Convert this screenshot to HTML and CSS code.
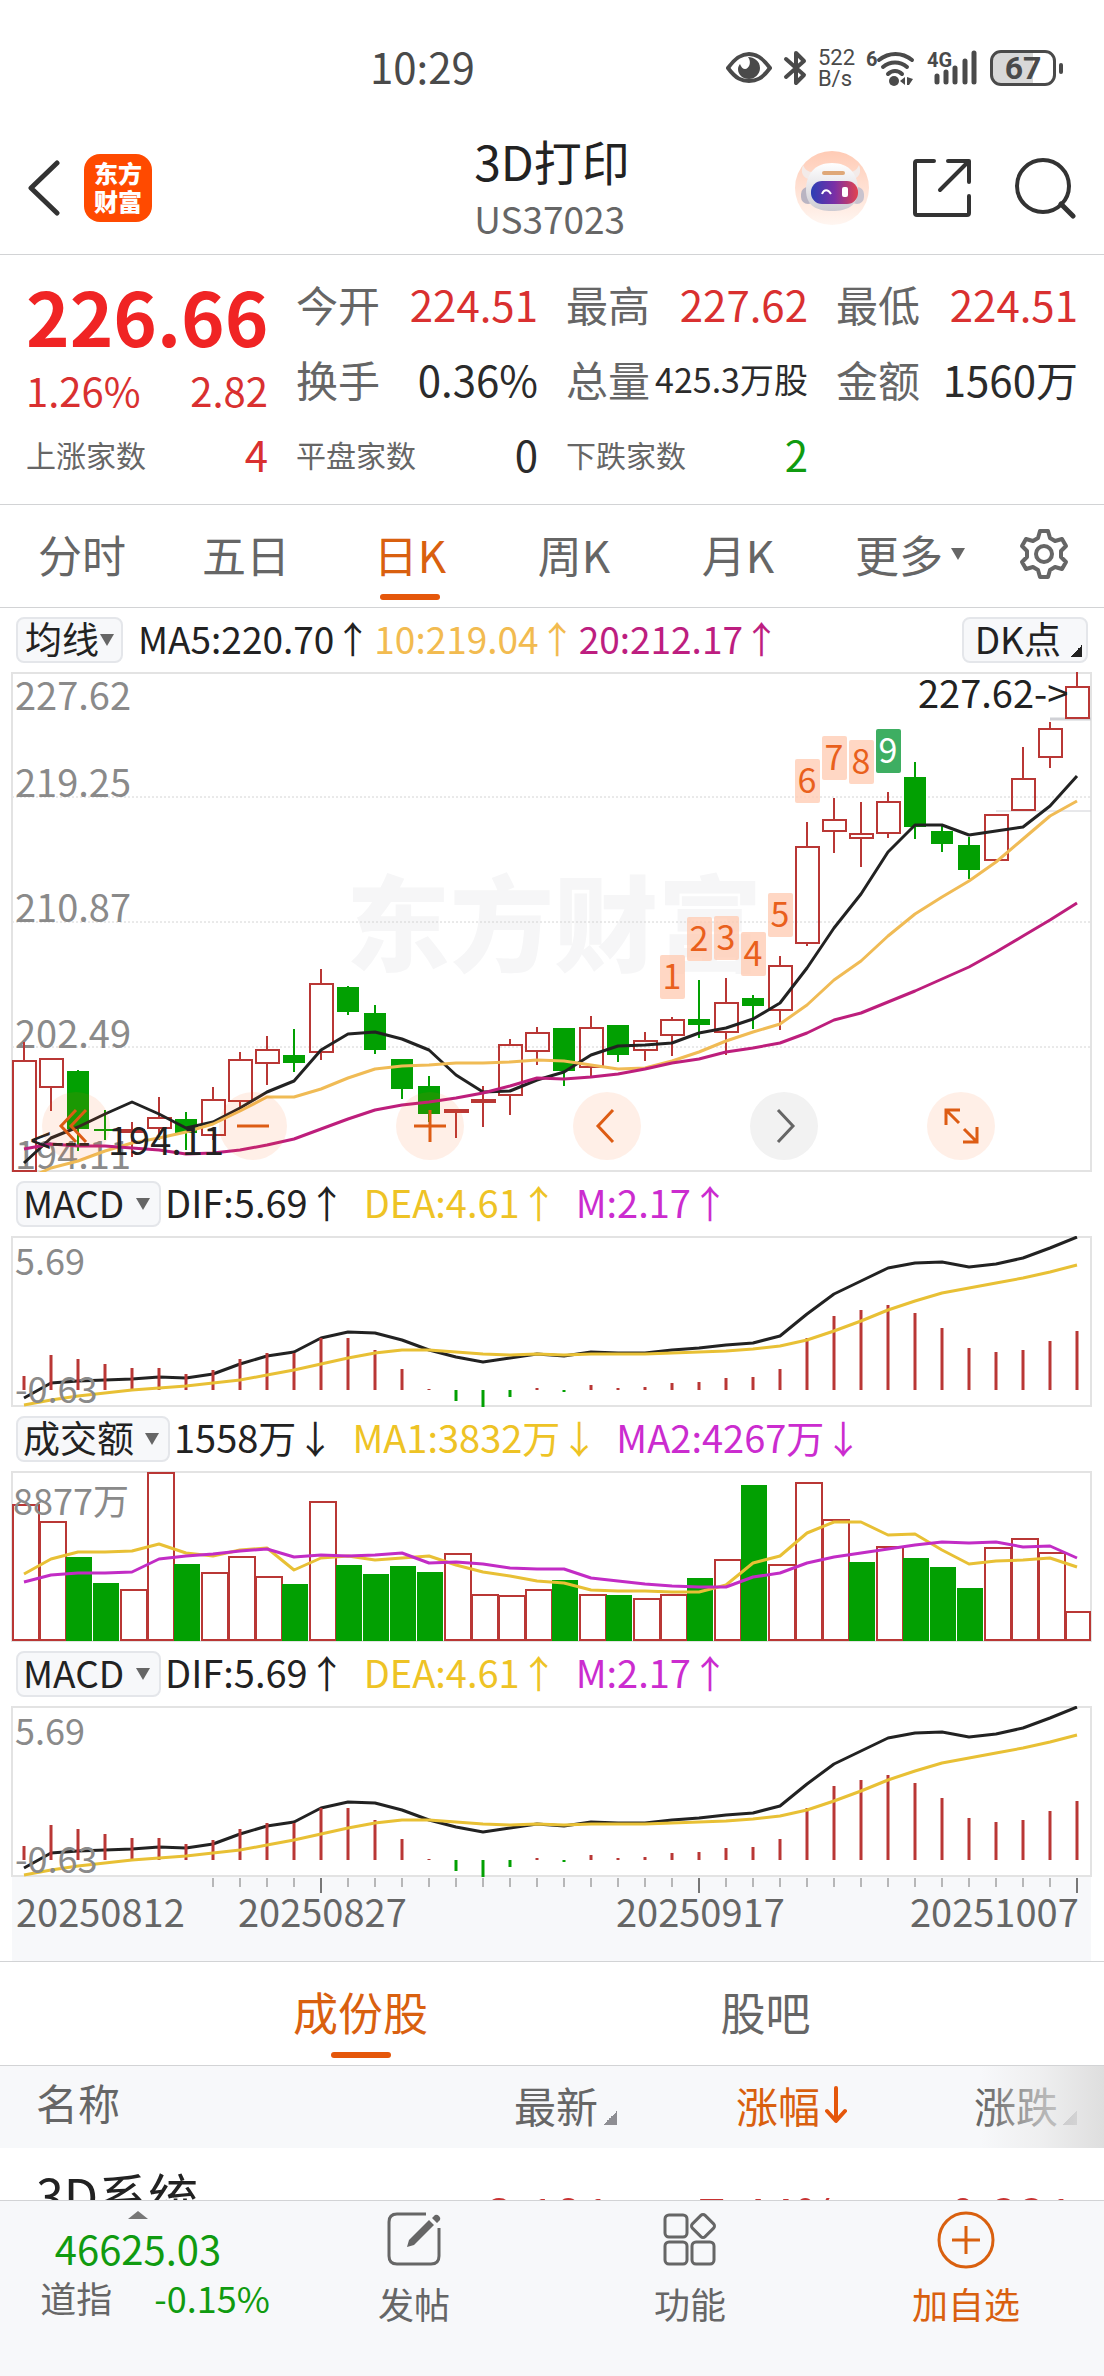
FILE: index.html
```html
<!DOCTYPE html>
<html lang="zh-CN">
<head>
<meta charset="utf-8">
<meta name="viewport" content="width=device-width, initial-scale=1">
<title>3D打印 US37023</title>
<link rel="stylesheet" href="styles.css">
</head>
<body>
<div class="app">
  <div class="status">
    <span class="clock">10:29</span>
    <div class="status-icons">
      <svg width="46" height="34" viewBox="0 0 46 34"><path d="M2 17C10 6 16 3 23 3s13 3 21 14c-8 11-14 13-21 13S10 28 2 17Z" fill="none" stroke="#4a4a4a" stroke-width="4" stroke-linejoin="round"/><path d="M22 6c6 0 12 4 12 11 0 6-5 11-11 11s-11-4-11-10c0-2 1-4 2-5 1 3 3 5 5 5 4 0 7-7 3-12Z" fill="#4a4a4a"/></svg>
      <svg width="24" height="36" viewBox="0 0 24 36"><path d="M3 9l18 16-8 8V3l8 8L3 27" fill="none" stroke="#4a4a4a" stroke-width="4" stroke-linejoin="round" stroke-linecap="round"/></svg>
      <span class="speed">522<br>B/s</span>
      <svg width="50" height="38" viewBox="0 0 50 38"><text x="0" y="17" class="tiny">6</text><g fill="none" stroke="#4a4a4a" stroke-width="4" stroke-linecap="round"><path d="M13 11c10-8 23-8 33 0"/><path d="M17 18c7-6 17-6 24 0"/><path d="M22 25c4-4 10-4 14 0"/></g><circle cx="28" cy="32" r="5" fill="#4a4a4a"/><path d="M34 32l5-4v8zM41 28l6 2-4 6h-2z" fill="#4a4a4a"/></svg>
      <svg width="52" height="38" viewBox="0 0 52 38"><text x="0" y="18" class="tiny">4G</text><path d="M10 27v6M19 23v10M28 19v14M38 12v21M47 4v29" stroke="#4a4a4a" stroke-width="5" stroke-linecap="round"/></svg>
      <span class="battery">67</span>
    </div>
  </div>

  <header class="header">
    <div class="header-side">
      <button class="icon-btn" aria-label="返回"><svg width="32" height="56" viewBox="0 0 32 56"><path d="M29 3L3 28l26 25" fill="none" stroke="#333" stroke-width="5" stroke-linecap="round" stroke-linejoin="round"/></svg></button>
      <a class="logo" href="#">东方<br>财富</a>
    </div>
    <div class="title"><h1>3D打印</h1><p>US37023</p></div>
    <div class="header-side header-right">
      <button class="icon-btn" aria-label="智能助手">
        <svg width="76" height="76" viewBox="0 0 76 76"><defs><linearGradient id="halo" x2="0" y2="1"><stop offset="0" stop-color="#ffcbb5"/><stop offset="1" stop-color="#fff6f1"/></linearGradient><linearGradient id="visor"><stop offset="0" stop-color="#2b3fb5"/><stop offset=".5" stop-color="#7a2fa6"/><stop offset="1" stop-color="#e2434f"/></linearGradient><linearGradient id="helmet" x2="0" y2="1"><stop offset="0" stop-color="#fff"/><stop offset="1" stop-color="#cdcbd2"/></linearGradient></defs><circle cx="38" cy="38" r="37" fill="url(#halo)"/><path d="M9 15c-3 8 0 13 8 15l5-8c-7 1-11-2-13-7ZM65 15c3 8 0 13-8 15l-5-8c7 1 11-2 13-7Z" fill="#f3ebe9"/><rect x="7" y="37" width="14" height="17" rx="7" fill="#b9b4c2"/><rect x="56" y="37" width="14" height="17" rx="7" fill="#c9c3ce"/><path d="M38 13c17 0 26 11 26 27s-11 21-26 21-26-5-26-21 9-27 26-27Z" fill="url(#helmet)"/><rect x="17" y="31" width="47" height="23" rx="11" fill="url(#visor)"/><path d="M30 23h19" stroke="#dfa878" stroke-width="4" stroke-linecap="round"/><path d="M28 44c2-5 6-5 9 0" fill="none" stroke="#fff" stroke-width="2"/><rect x="48" y="37" width="6" height="10" rx="2" fill="#fff"/></svg>
      </button>
      <button class="icon-btn" aria-label="分享"><svg width="60" height="60" viewBox="0 0 60 60" fill="none" stroke="#333" stroke-width="4" stroke-linecap="round" stroke-linejoin="round"><path d="M22 3H5Q3 3 3 5v50q0 2 2 2h50q2 0 2-2V38M36 3h21v21M56 4L28 32"/></svg></button>
      <button class="icon-btn" aria-label="搜索"><svg width="62" height="62" viewBox="0 0 62 62" fill="none" stroke="#333" stroke-width="4" stroke-linecap="round"><circle cx="29" cy="29" r="26"/><path d="M47 47l12 12" stroke-width="5"/></svg></button>
    </div>
  </header>

  <section class="quote">
    <div class="last"><strong>226.66</strong><div class="pair up"><span>1.26%</span><span>2.82</span></div></div>
    <div class="pair"><span class="key">今开</span><span class="up">224.51</span></div>
    <div class="pair"><span class="key">最高</span><span class="up">227.62</span></div>
    <div class="pair"><span class="key">最低</span><span class="up">224.51</span></div>
    <div class="pair"><span class="key">换手</span><span>0.36%</span></div>
    <div class="pair"><span class="key">总量</span><span class="compact">425.3万股</span></div>
    <div class="pair"><span class="key">金额</span><span>1560万</span></div>
    <div class="pair"><span class="key small">上涨家数</span><span class="up">4</span></div>
    <div class="pair"><span class="key small">平盘家数</span><span>0</span></div>
    <div class="pair"><span class="key small">下跌家数</span><span class="down">2</span></div>
  </section>

  <nav class="periods">
    <button>分时</button><button>五日</button><button class="active">日K</button><button>周K</button><button>月K</button>
    <button class="more" aria-haspopup="true">更多<i class="caret"></i></button>
    <button aria-label="设置"><svg width="52" height="52" viewBox="0 0 52 52" fill="none" stroke="#666" stroke-width="4" stroke-linejoin="round"><path d="M22 3h8l2 7 5 3 7-2 4 7-5 5v6l5 5-4 7-7-2-5 3-2 7h-8l-2-7-5-3-7 2-4-7 5-5v-6l-5-5 4-7 7 2 5-3z"/><circle cx="26" cy="26" r="8"/></svg></button>
  </nav>

  <main class="charts">
    <div class="legend legend-ma">
      <label class="picker tight"><select aria-label="主图指标"><option>均线</option></select><i class="caret"></i></label>
      <span>MA5:220.70↑</span><span class="ma10">10:219.04↑</span><span class="ma20">20:212.17↑</span>
      <button class="dk">DK点<i class="corner"></i></button>
    </div>
    <div class="price">
      <svg id="price" class="plot" viewBox="0 0 1104 500" role="img" aria-label="日K线"></svg>
      <div class="tools">
        <button aria-label="最早"><svg viewBox="0 0 68 68"><path d="M34 18L19 34l15 16M44 18L29 34l15 16"/></svg></button>
        <button aria-label="缩小"><svg viewBox="0 0 68 68"><path d="M18 34h32"/></svg></button>
        <button aria-label="放大"><svg viewBox="0 0 68 68"><path d="M18 34h32M34 18v32"/></svg></button>
        <button aria-label="向前"><svg viewBox="0 0 68 68"><path d="M40 18L25 34l15 16"/></svg></button>
        <button aria-label="向后" disabled><svg viewBox="0 0 68 68"><path d="M28 18l15 16-15 16"/></svg></button>
        <button aria-label="全屏"><svg viewBox="0 0 68 68"><path d="M19 33V18h14M19 18l13 13M36 50h14V35M50 50L37 37"/></svg></button>
      </div>
    </div>
    <div class="legend">
      <label class="picker"><select aria-label="副图一"><option>MACD</option></select><i class="caret"></i></label>
      <span>DIF:5.69↑</span><span class="dea">DEA:4.61↑</span><span class="m">M:2.17↑</span>
    </div>
    <svg class="plot macd" viewBox="0 0 1104 171" role="img" aria-label="MACD"></svg>
    <div class="legend">
      <label class="picker"><select aria-label="副图二"><option>成交额</option></select><i class="caret"></i></label>
      <span>1558万↓</span><span class="dea">MA1:3832万↓</span><span class="m">MA2:4267万↓</span>
    </div>
    <svg id="volume" class="plot" viewBox="0 0 1104 171" role="img" aria-label="成交额"></svg>
    <div class="legend">
      <label class="picker"><select aria-label="副图三"><option>MACD</option></select><i class="caret"></i></label>
      <span>DIF:5.69↑</span><span class="dea">DEA:4.61↑</span><span class="m">M:2.17↑</span>
    </div>
    <svg class="plot macd" viewBox="0 0 1104 171" role="img" aria-label="MACD"></svg>
    <svg id="axis" class="plot" viewBox="0 0 1104 84" role="img" aria-label="日期"></svg>
  </main>

  <nav class="sections"><button class="active">成份股</button><button>股吧</button></nav>

  <div class="members">
    <table>
      <thead><tr>
        <th>名称</th>
        <th><button>最新<i class="corner"></i></button></th>
        <th><button class="sorted">涨幅<svg width="22" height="38" viewBox="0 0 22 38" fill="none" stroke="#e5570b" stroke-width="4" stroke-linecap="round" stroke-linejoin="round"><path d="M11 2v32M2 25l9 10 9-10"/></svg></button></th>
        <th><button>涨跌<i class="corner"></i></button></th>
      </tr></thead>
      <tbody><tr><td>3D系统</td><td>3.191</td><td>7.44%</td><td>0.221</td></tr></tbody>
    </table>
  </div>

  <footer class="bottom">
    <button class="index"><i class="caret-up"></i><span class="value">46625.03</span><span class="change"><span>道指</span><span class="down">-0.15%</span></span></button>
    <button><svg width="56" height="56" viewBox="0 0 56 56" fill="none" stroke="#666" stroke-width="3"><path d="M40 3H11Q3 3 3 11v34q0 8 8 8h34q8 0 8-8V17"/><path d="M21 36l2-7L43 9l5 5-20 20zM46 7l3-3q2-1 4 1t1 4l-3 3z" fill="#666" stroke="none"/></svg>发帖</button>
    <button><svg width="56" height="56" viewBox="0 0 56 56" fill="none" stroke="#666" stroke-width="3"><rect x="3" y="4" width="22" height="22" rx="4"/><rect x="3" y="31" width="22" height="22" rx="4"/><rect x="30" y="31" width="22" height="22" rx="4"/><rect x="32" y="6" width="18" height="18" rx="3" transform="rotate(45 41 15)"/></svg>功能</button>
    <button class="add"><svg width="58" height="58" viewBox="0 0 58 58" fill="none" stroke="#d9600f" stroke-width="3"><circle cx="29" cy="29" r="27"/><path d="M15 29h28M29 15v28"/></svg>加自选</button>
  </footer>
</div>
<script src="chart.js"></script>
</body>
</html>
```
FILE: styles.css
```css
* { box-sizing: border-box; }
body {
  margin: 0;
  background: #fff;
  color: #2b2b2b;
  font-family: "Noto Sans CJK SC", sans-serif;
  font-size: 42px;
}
button, select { font: inherit; color: inherit; background: none; border: 0; padding: 0; margin: 0; }
svg { display: block; flex: none; }
h1, p { margin: 0; font-weight: 400; }

.app { display: flex; flex-direction: column; height: 100vh; }
.app > * { flex: none; }

.status {
  display: flex;
  align-items: center;
  justify-content: space-between;
  height: 130px;
  padding: 6px 44px 0 370px;
  color: #4a4a4a;
}
.clock { line-height: 56px; padding-bottom: 4px; }
.status-icons { display: flex; align-items: center; gap: 11px; }
.speed { font-family: Roboto, sans-serif; font-size: 22px; line-height: 21px; }
.tiny { font: 700 20px Roboto, sans-serif; fill: #4a4a4a; }
.battery {
  position: relative;
  width: 66px;
  height: 36px;
  margin-right: 4px;
  border: 3px solid #4a4a4a;
  border-radius: 11px;
  background: linear-gradient(90deg, #d8d8d8 67%, #fff 67%);
  font: 700 32px/30px Roboto, sans-serif;
  text-align: center;
}
.battery::after {
  content: "";
  position: absolute;
  right: -10px;
  top: 10px;
  width: 4px;
  height: 11px;
  border-radius: 2px;
  background: #4a4a4a;
}

.header {
  display: grid;
  grid-template-columns: 1fr auto 1fr;
  align-items: center;
  padding: 0 28px 8px;
  border-bottom: 1px solid #d2d3d5;
}
.header-side { display: flex; align-items: center; gap: 24px; }
.header-right { justify-content: flex-end; gap: 42px; }
.title { color: #222; }
.title h1 { font-size: 48px; line-height: 60px; }
.title p { font-size: 37px; line-height: 56px; color: #666; }
.logo {
  width: 68px;
  height: 68px;
  padding-top: 5px;
  border-radius: 16px;
  background: #ff4a00;
  color: #fff;
  font-size: 24px;
  font-weight: 900;
  line-height: 28px;
  text-align: center;
  text-decoration: none;
}

.quote {
  display: grid;
  grid-template-columns: repeat(4, minmax(0, 1fr));
  grid-auto-rows: 75px;
  column-gap: 28px;
  padding: 11px 26px 13px;
  border-bottom: 1px solid #d2d3d5;
}
.pair { display: flex; justify-content: space-between; align-items: center; white-space: nowrap; }
.last { grid-row: span 2; }
.last strong { display: block; font-size: 74px; line-height: 98px; color: #f02424; }
.last .pair { height: 52px; font-size: 40px; }
.key { color: #666; }
.small { font-size: 30px; }
.compact { font-size: 34px; }
.up { color: #d93030; }
.down { color: #109b10; }

.periods {
  display: grid;
  grid-template-columns: repeat(6, minmax(0, 41fr)) 30fr;
  height: 103px;
  border-bottom: 1px solid #d2d3d5;
  color: #666;
  font-size: 44px;
}
.periods button, .sections button {
  position: relative;
  display: flex;
  align-items: center;
  justify-content: center;
  gap: 8px;
  padding-bottom: 4px;
}
.periods .more { padding-left: 16px; }
.active { color: #d9600f; }
.active::after {
  content: "";
  position: absolute;
  left: calc(50% - 30px);
  bottom: 7px;
  width: 60px;
  height: 6px;
  border-radius: 3px;
  background: #e5570b;
}
.caret { border: solid transparent; border-width: 12px 7px 0; border-top-color: #666; }

.legend { display: flex; align-items: center; gap: 18px; height: 64px; padding: 0 16px; font-size: 38px; color: #222; white-space: nowrap; }
.legend span { line-height: 56px; padding-bottom: 4px; }
.legend-ma { gap: 3px; font-size: 37px; }
.picker, .dk {
  display: flex;
  align-items: center;
  height: 46px;
  border: 2px solid #e4e6ea;
  border-radius: 8px;
  background: #f7f8fa;
  font-size: 37px;
}
.picker { gap: 11px; padding: 0 9px 0 5px; margin-right: -14px; }
.picker select { appearance: none; height: 42px; line-height: 38px; padding-bottom: 4px; color: #222; }
.tight { gap: 1px; margin-right: 12px; padding: 0 7px; }
.dk { gap: 9px; margin-left: auto; padding: 0 4px 4px 11px; }
.corner { align-self: flex-end; width: 14px; height: 14px; background: linear-gradient(135deg, transparent 50%, #8e8e93 50%); }
.dk .corner { width: 12px; height: 12px; background: linear-gradient(135deg, transparent 50%, #222 50%); }
.ma10 { color: #f2bb50; }
.ma20 { color: #bd1e80; }
.dea { color: #eec325; }
.m { color: #cb2ccf; }

.plot { width: 100%; height: auto; }
.plot text { font-size: 38px; fill: #8a8a8a; }
.plot .sub { font-size: 36px; }
.plot .peak { fill: #222; }
.plot .date { fill: #666; }
.plot .watermark { font-size: 104px; font-weight: 900; fill: #f6f6f7; }
.plot .count { font-size: 34px; fill: #e9601c; text-anchor: middle; }
.plot .count-last { fill: #fff; }
.price { position: relative; }
.tools {
  position: absolute;
  left: 42px;
  right: 109px;
  bottom: 12px;
  display: flex;
  justify-content: space-between;
}
.tools button { width: 68px; height: 68px; border-radius: 50%; background: rgba(255, 96, 20, .1); }
.tools button:disabled { background: #f2f2f2; }
.tools svg { fill: none; stroke: #dd5c14; stroke-width: 3; }
.tools :disabled svg { stroke: #666; }

.sections {
  display: grid;
  grid-template-columns: 1fr 1fr;
  height: 105px;
  padding: 0 136px 0 158px;
  border-top: 1px solid #d2d3d5;
  border-bottom: 1px solid #d2d3d5;
  color: #666;
  font-size: 45px;
}

.app > .members { position: relative; flex: 1 1 0; min-height: 0; overflow: hidden; }
.members::after {
  content: "";
  position: absolute;
  top: 0;
  right: 0;
  width: 124px;
  height: 82px;
  background: linear-gradient(90deg, rgba(247, 248, 250, 0), rgba(232, 232, 232, .6) 50%, #dedede);
  pointer-events: none;
}
table { width: 100%; table-layout: fixed; border-collapse: collapse; }
th, td { text-align: right; font-weight: 400; padding: 0; }
th { height: 82px; padding-bottom: 10px; line-height: 56px; background: #f7f8fa; color: #666; width: 230px; }
th:first-child, td:first-child { width: auto; padding-left: 36px; text-align: left; }
th:last-child { width: 257px; padding-right: 27px; }
th button { display: inline-flex; align-items: center; gap: 5px; vertical-align: middle; }
th .corner { margin-bottom: 8px; }
.sorted { color: #d9600f; }
td { height: 132px; padding: 28px 6px 0 0; font-size: 50px; color: #c83232; vertical-align: top; line-height: 76px; }
td:first-child { padding-top: 8px; color: #222; }
td:last-child { padding-right: 30px; }

.bottom {
  position: relative;
  display: grid;
  grid-template-columns: repeat(4, 1fr);
  height: 176px;
  border-top: 1px solid #d2d3d5;
  background: #f7f8fa;
  color: #666;
  font-size: 36px;
}
.bottom button { display: flex; flex-direction: column; align-items: center; gap: 10px; padding-top: 10px; line-height: 52px; }
.bottom .index { gap: 0; }
.caret-up { border: solid transparent; border-width: 0 10px 8px; border-bottom-color: #777; }
.value { font-size: 40px; line-height: 52px; padding-top: 3px; color: #109b10; }
.change { display: flex; gap: 42px; padding-left: 34px; line-height: 46px; }
.bottom .add { color: #d9600f; gap: 8px; }
```
FILE: chart.js
```js
const RED = "#b93735", GREEN = "#02a002", BLACK = "#222";
const x = i => 24 + 27 * i;
const el = (tag, attrs, text = "") =>
  `<${tag} ${Object.entries(attrs).map(([k, v]) => `${k}="${v}"`).join(" ")}>${text}</${tag}>`;
const line = (ys, stroke) =>
  el("polyline", { points: ys.map((y, i) => `${x(i)},${y}`).join(" "), fill: "none", stroke, "stroke-width": 3, "stroke-linejoin": "round" });
const stick = (i, a, b, stroke, width = 2) => el("path", { d: `M${x(i)} ${a}V${b}`, stroke, "stroke-width": width });
const frame = h => el("path", { d: `M12 1H1091V${h - 1}H12Z`, fill: "none", stroke: "#e3e3e3", "stroke-width": 2 });
const label = (tx, ty, text, cls = "") => el("text", { x: tx, y: ty, class: cls }, text);

// direction, high, body top, body bottom, low
const candles = [
  ["r",370,388,500,500],["r",386,386,416,439],["g",398,399,457,479],["g",438,457,459,468],["r",450,457,461,485],
  ["r",425,445,457,468],["g",440,447,461,478],["r",415,427,464,468],["r",380,387,430,436],["r",364,377,392,413],
  ["g",357,383,391,400],["r",297,311,381,388],["g",314,315,340,343],["g",333,341,378,382],["g",387,387,417,427],
  ["g",404,414,442,450],["r",437,437,441,466],["r",414,427,431,455],["r",367,372,424,443],["r",355,360,380,393],
  ["g",356,356,399,414],["r",344,355,396,405],["g",353,353,383,390],["r",360,368,379,389],["r",345,347,364,384],
  ["g",308,347,353,366],["r",306,330,361,383],["g",323,326,334,357],["r",284,293,339,358],["r",150,174,272,274],
  ["r",126,147,160,181],["r",130,161,167,195],["r",120,129,162,166],["g",90,105,155,167],["g",153,159,172,180],
  ["g",165,173,198,207],["r",142,142,189,189],["r",75,106,139,139],["r",50,56,86,96],["r",0,14,47,47]
];
const ma5 = [491,466,455,442,430,442,456,450,436,420,409,378,362,360,367,378,403,420,419,408,400,383,374,373,371,361,356,347,331,296,256,222,180,153,153,163,159,155,134,104];
const ma10 = [508,496,489,479,471,466,460,452,439,425,425,417,406,397,394,393,391,391,390,388,389,393,397,396,389,380,369,360,352,333,308,289,264,242,225,209,190,167,144,129];
const ma20 = [477,472,474,474,476,478,482,481,478,473,467,457,447,438,433,430,426,421,414,406,407,405,402,397,391,387,380,376,371,361,348,341,330,319,307,295,280,264,248,231];
// top of each sequence-count badge, starting at candle 24
const counts = [283,245,244,260,221,87,64,68,57];

const body = ([dir, hi, top, bottom, lo], i) => {
  const c = dir === "r" ? RED : GREEN;
  if (dir === "g")
    return stick(i, hi, lo, c) + el("rect", { x: x(i) - 11, y: top, width: 22, height: bottom - top, fill: c });
  return stick(i, hi, top, c) + stick(i, bottom, lo, c) +
    el("rect", { x: x(i) - 11, y: top + 1, width: 23, height: Math.max(2, bottom - top - 2), fill: "none", stroke: c, "stroke-width": 2 });
};

document.getElementById("price").innerHTML =
  label(346, 292, "东方财富", "watermark") +
  [125, 250, 375].map(y => el("path", { d: `M12 ${y}H1091`, stroke: "#d4d4d4", "stroke-dasharray": "2 2" })).join("") +
  frame(500) +
  [[38,"227.62"],[125,"219.25"],[250,"210.87"],[376,"202.49"],[497,"194.11"]].map(([y, t]) => label(15, y, t)).join("") +
  el("path", { d: "M1050 47H1091", stroke: "#d0d1d6", "stroke-width": 3 }) +
  el("path", { d: "M996 139H1091", stroke: "#d0d1d6" }) +
  candles.map(body).join("") +
  line(ma5, BLACK) + line(ma10, "#f0bb55") + line(ma20, "#bd1e7c") +
  label(30, 483, "&lt;---", "peak") + label(108, 483, "194.11", "peak") + label(918, 36, "227.62-&gt;", "peak") +
  counts.map((y, n) => {
    const last = n === 8, cx = x(24 + n);
    return el("rect", { x: cx - 12, y, width: 25, height: 44, rx: 2, fill: last ? "#3eae62" : "#ffc9b0", "fill-opacity": last ? 1 : .75 }) +
      label(cx, y + 34, n + 1, last ? "count count-last" : "count");
  }).join("");

const hist = [140,119,123,128,132,132,138,134,123,117,117,102,102,114,133,153,165,171,161,152,156,149,152,151,147,146,142,141,133,102,80,74,69,77,92,112,116,114,105,95];
const dif = [162,147,145,144,143,141,142,138,128,120,116,102,96,97,104,114,121,126,122,118,120,116,117,117,114,112,109,107,100,78,58,45,32,27,26,31,28,22,12,1];
const dea = [169,164,160,157,154,152,150,147,144,139,134,128,122,117,114,114,116,118,119,118,119,118,118,118,117,116,115,113,110,104,95,85,74,65,57,52,47,42,36,29];
document.querySelectorAll(".macd").forEach(svg => {
  svg.innerHTML = frame(171) + line(dif, BLACK) +
    hist.map((y, i) => stick(i, y, 154, y > 154 ? GREEN : RED, 3)).join("") +
    line(dea, "#e8c035") + label(15, 39, "5.69", "sub") + label(15, 167, "-0.63", "sub");
});

const volumes = "r33 r50 g86 g112 r118 r1 g93 r101 r85 r105 g113 r30 g94 g103 g95 g101 r82 r123 r124 r118 g109 r123 g124 r127 r123 g107 r88 g14 r93 r11 r48 g91 r75 g87 g96 g117 r76 r67 r81 r140".split(" ");
const amount1 = [103,88,81,81,80,73,82,85,79,77,99,87,85,89,87,85,94,101,105,110,112,119,120,120,121,121,114,92,85,62,51,51,64,63,79,93,90,89,87,96];
const amount2 = [111,104,102,102,101,88,85,83,80,78,86,84,85,84,82,92,91,93,97,98,98,107,110,113,115,116,116,106,102,92,86,82,78,74,71,72,71,76,75,87];
document.getElementById("volume").innerHTML = frame(171) +
  volumes.map((v, i) => {
    const top = +v.slice(1);
    return v[0] === "g"
      ? el("rect", { x: x(i) - 12, y: top, width: 26, height: 170 - top, fill: GREEN })
      : el("rect", { x: x(i) - 11, y: top + 1, width: i === 39 ? 24 : 26, height: 168 - top, fill: "none", stroke: RED, "stroke-width": 2 });
  }).join("") +
  line(amount1, "#e8c035") + line(amount2, "#c22cc5") + label(13, 44, "8877万", "sub");

document.getElementById("axis").innerHTML =
  el("rect", { x: 12, y: 0, width: 1079, height: 84, fill: "#f7f8fa" }) +
  candles.map((_, i) => {
    const major = i === 11 || i === 25 || i === 39;
    return i < 7 ? "" : el("path", { d: `M${x(i)} 1v${major ? 15 : 9}`, stroke: "#777", "stroke-width": major ? 2 : 1 });
  }).join("") +
  [[16,"20250812"],[238,"20250827"],[616,"20250917"],[910,"20251007"]].map(([dx, t]) => label(dx, 50, t, "date")).join("");
```
